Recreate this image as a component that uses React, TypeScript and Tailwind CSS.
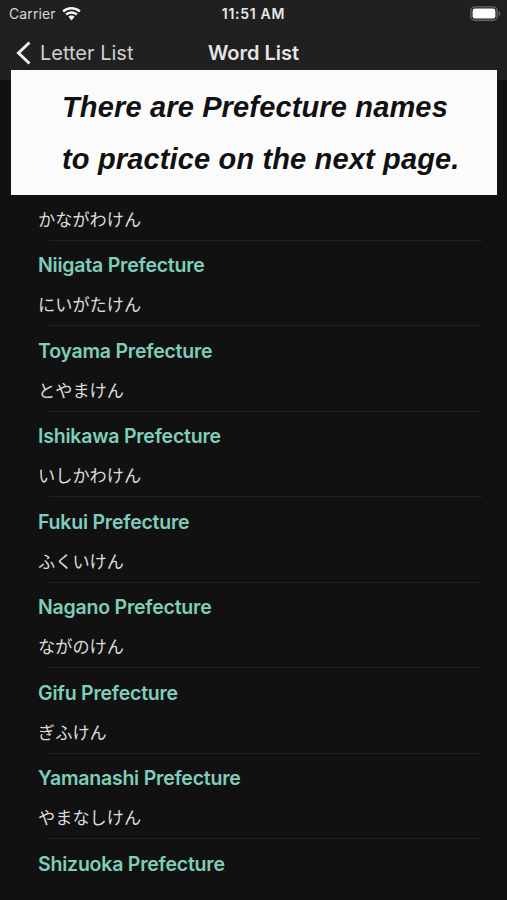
interface Word {
  name?: string;
  kana?: string;
}

const WORDS: Word[] = [
  { kana: 'かながわけん' },
  { name: 'Niigata Prefecture', kana: 'にいがたけん' },
  { name: 'Toyama Prefecture', kana: 'とやまけん' },
  { name: 'Ishikawa Prefecture', kana: 'いしかわけん' },
  { name: 'Fukui Prefecture', kana: 'ふくいけん' },
  { name: 'Nagano Prefecture', kana: 'ながのけん' },
  { name: 'Gifu Prefecture', kana: 'ぎふけん' },
  { name: 'Yamanashi Prefecture', kana: 'やまなしけん' },
  { name: 'Shizuoka Prefecture' },
];

function WifiIcon() {
  return (
    <svg width="19" height="14" viewBox="0 0 19 14" fill="#f4f4f4">
      <path d="M9.5 0C5.9 0 2.7 1.4.3 3.6l1.7 1.8C4 3.6 6.6 2.5 9.5 2.5s5.500 1.1 7.500 2.900l1.700-1.800C16.300 1.400 13.100 0 9.500 0z" />
      <path d="M9.500 4.300c-2.400 0-4.600.9-6.200 2.400L5 8.500c1.200-1.100 2.800-1.800 4.500-1.800s3.300.7 4.500 1.800l1.700-1.800c-1.600-1.500-3.800-2.400-6.200-2.400z" />
      <path d="M9.500 8.500c-1.200 0-2.300.5-3.100 1.300l3.100 3.700 3.100-3.700c-.8-.8-1.900-1.300-3.100-1.300z" />
    </svg>
  );
}

function BatteryIcon() {
  return (
    <svg width="31" height="16" viewBox="0 0 31 16">
      <rect x="0.9" y="0.9" width="26.2" height="13.4" rx="4" fill="none" stroke="#666666" strokeWidth="1.4" />
      <rect x="2.6" y="2.6" width="22.8" height="10" rx="2.3" fill="#fff" />
      <path d="M28.600 5v5.200c1-.4 1.600-1.400 1.600-2.600S29.600 5.400 28.600 5z" fill="#666666" />
    </svg>
  );
}

function StatusBar() {
  return (
    <div className="grid h-[28px] grid-cols-3 items-center text-[14px] leading-none">
      <div className="flex items-center gap-[6px] pl-[9px] text-[#d8d8d8]">
        <span className="tracking-[0.1px]">Carrier</span>
        <WifiIcon />
      </div>
      <span className="text-center font-semibold tracking-[0.7px] text-[#e8e8e8]">11:51 AM</span>
      <div className="flex justify-end pr-[6px]">
        <BatteryIcon />
      </div>
    </div>
  );
}

function NavBar() {
  return (
    <div className="grid h-[49px] grid-cols-3 items-center text-[20px] leading-none">
      <button type="button" className="flex items-center gap-[9px] pl-[16px] text-[#cfcfcf]">
        <svg width="15" height="24" viewBox="0 0 15 24" fill="none" stroke="#ececec" strokeWidth="3">
          <path d="M13.500 1.500 2.500 12l11 10.500" />
        </svg>
        <span className="whitespace-nowrap">Letter List</span>
      </button>
      <h1 className="text-center font-semibold text-[#e6e6e6]">Word List</h1>
    </div>
  );
}

function WordRow({ name, kana }: Word) {
  return (
    <li className="flex h-[85.5px] flex-col">
      <p className="mt-[11.5px] h-[26px] pl-[38px] text-[19.5px] leading-[26px] font-semibold tracking-[-0.22px] text-[#7fcdbb]">
        {name}
      </p>
      <p className="mt-[13px] h-[26px] pl-[38px] font-['Noto_Sans_CJK_JP',sans-serif] text-[17.2px] leading-[26px] text-[#dcdcdc]">
        {kana}
      </p>
      {kana && <div className="mt-auto mr-[25px] ml-[49px] h-px bg-[#222222]" />}
    </li>
  );
}

export default function App() {
  return (
    <div className="relative h-[900px] w-[507px] overflow-hidden bg-[#111111] font-['Inter',sans-serif]">
      <header className="h-[80px] bg-[#202020]">
        <StatusBar />
        <NavBar />
      </header>

      <ul className="pt-[75px]">
        {WORDS.map((w, i) => (
          <WordRow key={i} {...w} />
        ))}
      </ul>

      <div className="absolute top-[70px] left-[11px] h-[125px] w-[486px] bg-[#fbfbfb] pt-[11px] pl-[51px] font-['Liberation_Sans',Arial,sans-serif] text-[29px] leading-[52px] font-bold tracking-[0.15px] whitespace-nowrap text-[#111111] italic">
        <p>There are Prefecture names</p>
        <p>to practice on the next page.</p>
      </div>
    </div>
  );
}
